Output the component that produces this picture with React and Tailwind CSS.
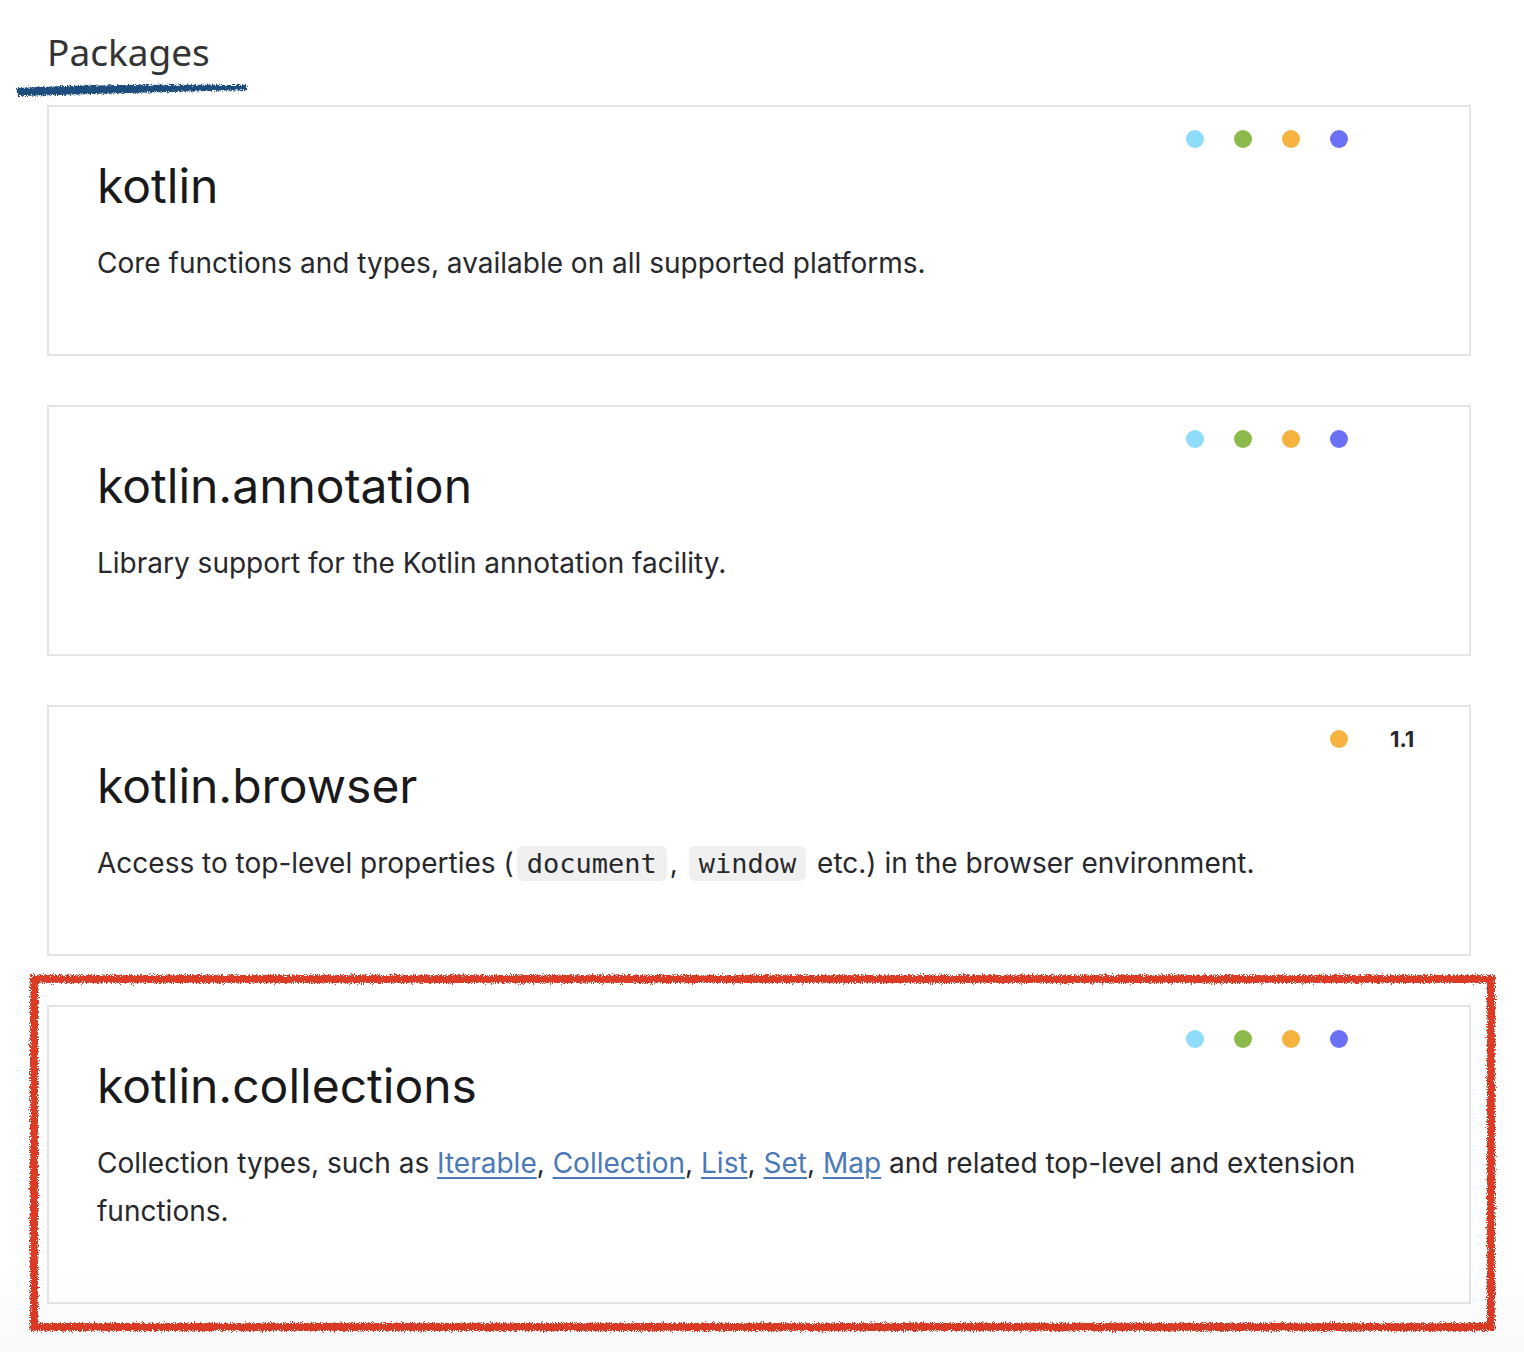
import React from 'react';

const DOT_COLORS = {
  common: 'bg-[#8ddcfa]',
  jvm: 'bg-[#8bba4a]',
  js: 'bg-[#f6b23e]',
  native: 'bg-[#6b71f5]',
};

const packages = [
  {
    name: 'kotlin',
    platforms: ['common', 'jvm', 'js', 'native'],
    desc: <>Core functions and types, available on all supported platforms.</>,
  },
  {
    name: 'kotlin.annotation',
    platforms: ['common', 'jvm', 'js', 'native'],
    desc: <>Library support for the Kotlin annotation facility.</>,
  },
  {
    name: 'kotlin.browser',
    platforms: ['js'],
    since: '1.1',
    desc: (
      <>
        Access to top-level properties (<Code>document</Code>, <Code>window</Code> etc.) in the browser environment.
      </>
    ),
  },
  {
    name: 'kotlin.collections',
    platforms: ['common', 'jvm', 'js', 'native'],
    highlight: true,
    desc: (
      <>
        Collection types, such as <DocLink>Iterable</DocLink>, <DocLink>Collection</DocLink>, <DocLink>List</DocLink>,{' '}
        <DocLink>Set</DocLink>, <DocLink>Map</DocLink> and related top-level and extension functions.
      </>
    ),
  },
];

function Code({ children }) {
  return (
    <code className="mx-[3px] rounded-[6px] bg-[#f0f0f0] px-[10px] py-[2px] font-['DejaVu_Sans_Mono',monospace] text-[27px] leading-none text-[#27282c]">
      {children}
    </code>
  );
}

function DocLink({ children }) {
  return (
    <a href="#" className="text-[#4b79b7] underline decoration-[2px] underline-offset-[4px]">
      {children}
    </a>
  );
}

function RoughFilter({ id, scale = 3, freq = 0.9 }) {
  return (
    <filter id={id} x="-5%" y="-30%" width="110%" height="160%">
      <feTurbulence type="fractalNoise" baseFrequency={freq} numOctaves="3" seed="7" result="noise" />
      <feDisplacementMap in="SourceGraphic" in2="noise" scale={scale} xChannelSelector="R" yChannelSelector="G" />
    </filter>
  );
}

function PackageCard({ pkg }) {
  return (
    <div className="relative flex flex-col border-2 border-[#e4e4e4] bg-white px-[48px] pt-[23px] pb-[67px]">
      <div className="flex h-[18px] items-center justify-end">
        <div className="flex items-center gap-[30px]">
          {pkg.platforms.map((p) => (
            <span key={p} className={`h-[18px] w-[18px] rounded-full ${DOT_COLORS[p]}`} />
          ))}
        </div>
        <div className="w-[73px] pl-[42px] text-[22px] font-bold leading-none text-[#27282c]">{pkg.since}</div>
      </div>
      <h2 className="mt-[10px] text-[48px] leading-[55px] font-normal text-[#19191c]">{pkg.name}</h2>
      <p className="mt-[26px] text-[28px] leading-[48px] text-[#27282c]">{pkg.desc}</p>
    </div>
  );
}

export default function App() {
  return (
    <div className="relative min-h-[1352px] w-[1524px] overflow-hidden bg-white font-['Inter',sans-serif]">
      <svg className="absolute h-0 w-0">
        <defs>
          <RoughFilter id="rough-red" scale={7} freq={0.9} />
          <RoughFilter id="rough-blue" scale={5} freq={0.8} />
        </defs>
      </svg>

      <div className="relative px-[47px] pt-[29px] pb-[30px]">
        <h1 className="font-['Noto_Sans',sans-serif] text-[37px] leading-[46px] text-[#333]">Packages</h1>
        {/* brush underline */}
        <svg className="absolute left-[10px] top-[78px]" width="244" height="24" viewBox="0 0 244 24">
          <path
            d="M6 10 C 60 7, 140 6, 236 7 L 238 12 C 150 14, 80 16, 8 18 Z"
            fill="#1d4e7d"
            filter="url(#rough-blue)"
          />
        </svg>
      </div>

      <div className="ml-[47px] flex w-[1424px] flex-col gap-[49px]">
        {packages.map((pkg) => (
          <div key={pkg.name} className="relative">
            <PackageCard pkg={pkg} />
            {pkg.highlight && (
              <svg
                className="pointer-events-none absolute left-[-19px] top-[-32px]"
                width="1469"
                height="360"
                viewBox="0 0 1469 360"
              >
                <rect
                  x="6"
                  y="6"
                  width="1457"
                  height="348"
                  fill="none"
                  stroke="#dc3a25"
                  strokeWidth="8"
                  filter="url(#rough-red)"
                />
              </svg>
            )}
          </div>
        ))}
      </div>

      <div className="pointer-events-none absolute bottom-0 left-0 h-[90px] w-full bg-gradient-to-b from-transparent to-black/[0.025]" />
    </div>
  );
}
